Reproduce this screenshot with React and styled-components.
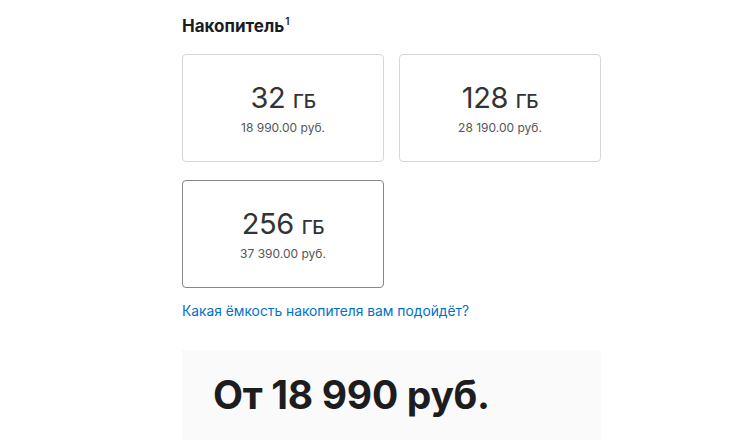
import React from 'react';
import styled, { createGlobalStyle } from 'styled-components';

const GlobalStyle = createGlobalStyle`
  body {
    margin: 0;
    background: #fff;
    font-family: Inter, "Noto Sans", sans-serif;
    color: #1d1d1f;
  }
`;

const options = [
  { size: '32', price: '18 990.00 руб.' },
  { size: '128', price: '28 190.00 руб.' },
  { size: '256', price: '37 390.00 руб.', selected: true },
];

const App = () => {
  return (
    <>
      <GlobalStyle />
      <Page>
        <Title>
          Накопитель<Sup>1</Sup>
        </Title>
        <Grid>
          {options.map(option => (
            <Card key={option.size} $selected={option.selected}>
              <Capacity>
                {option.size} <Unit>ГБ</Unit>
              </Capacity>
              <Price>{option.price}</Price>
            </Card>
          ))}
        </Grid>
        <HelpLink href="#">Какая ёмкость накопителя вам подойдёт?</HelpLink>
        <Summary>
          <Total>От 18 990 руб.</Total>
        </Summary>
      </Page>
    </>
  );
};

export default App;

const Page = styled.div`
  width: 419px;
  margin-left: 182px;
  padding-top: 14px;
  display: flex;
  flex-direction: column;
`;

const Title = styled.div`
  font-size: 17px;
  font-weight: 700;
  line-height: 24px;
  margin-bottom: 16px;
`;

const Sup = styled.sup`
  font-size: 10px;
  font-weight: 600;
  vertical-align: 7px;
  line-height: 0;
  margin-left: 1px;
`;

const Grid = styled.div`
  display: grid;
  grid-template-columns: 202px 202px;
  column-gap: 15px;
  row-gap: 18px;
`;

const Card = styled.div`
  height: 108px;
  box-sizing: border-box;
  border: 1px solid ${({ $selected }) => ($selected ? '#86868b' : '#d6d6d6')};
  border-radius: 4px;
  display: flex;
  flex-direction: column;
  align-items: center;
  justify-content: center;
  padding-top: 2px;
`;

const Capacity = styled.div`
  font-size: 29px;
  font-weight: 400;
  line-height: 32px;
  color: #333;
  letter-spacing: -0.4px;
`;

const Unit = styled.span`
  font-size: 19px;
  font-weight: 500;
`;

const Price = styled.div`
  font-size: 12px;
  line-height: 16px;
  color: #555;
  margin-top: 2px;
`;

const HelpLink = styled.a`
  margin-top: 14px;
  font-size: 13.8px;
  line-height: 18px;
  color: #0070c9;
  text-decoration: none;
  align-self: flex-start;
`;

const Summary = styled.div`
  margin-top: 30px;
  height: 90px;
  background: #fafafa;
  padding: 20px 31px 0;
  box-sizing: border-box;
`;

const Total = styled.div`
  font-size: 39px;
  font-weight: 700;
  line-height: 50px;
  color: #1d1d1f;
  letter-spacing: -0.3px;
`;
